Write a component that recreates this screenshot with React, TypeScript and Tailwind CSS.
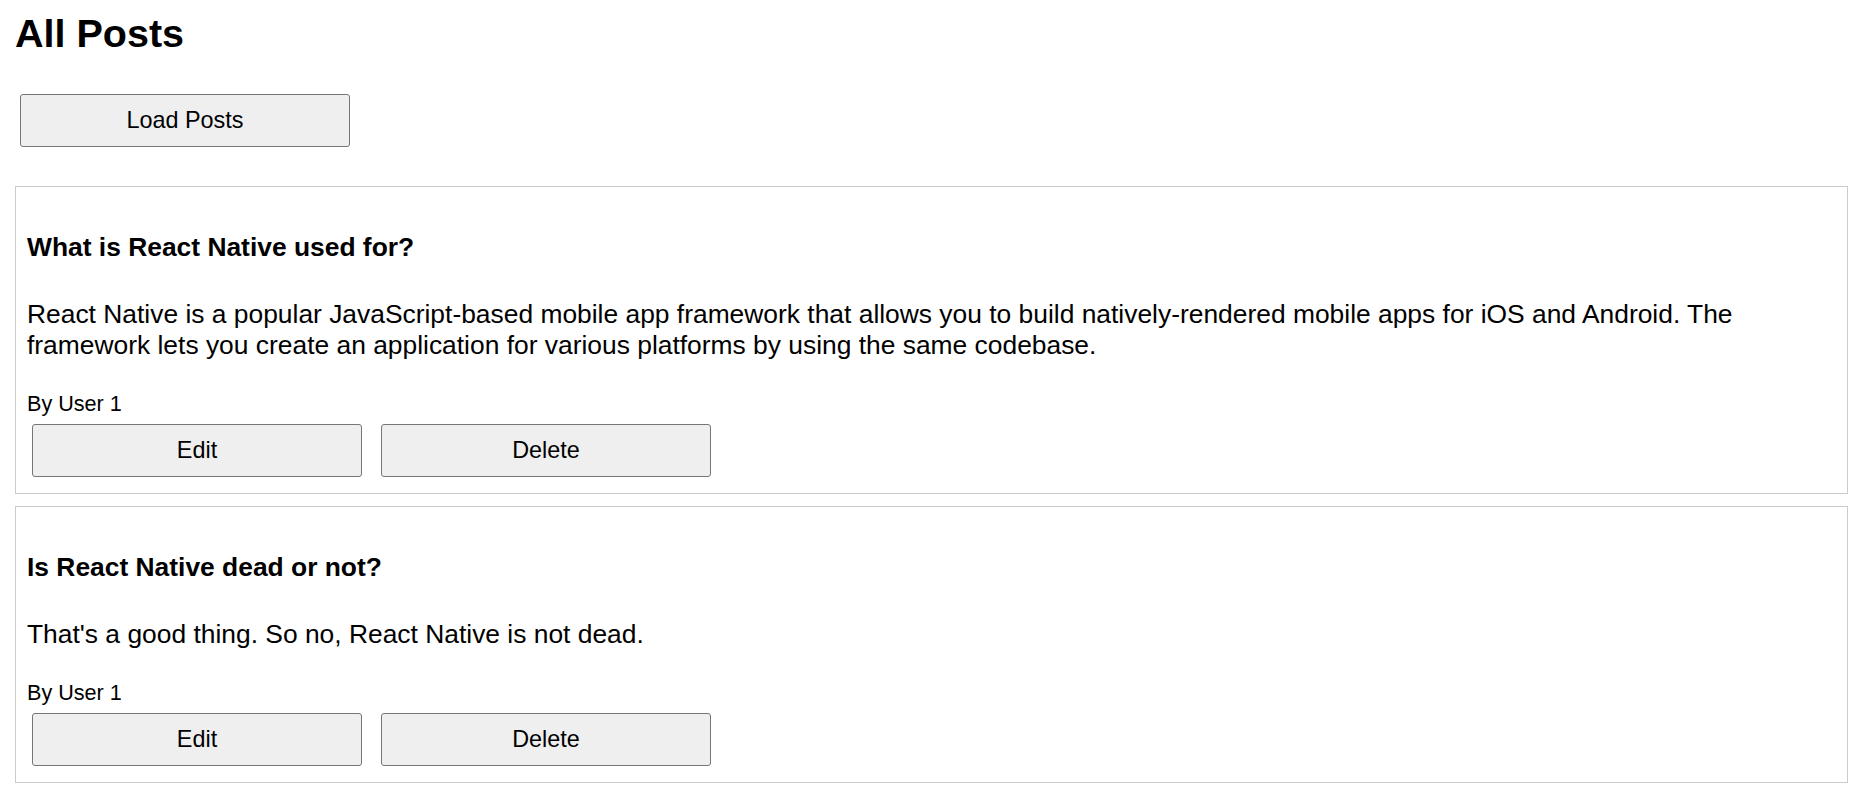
import React from "react";

type Post = { id: number; title: string; body: string; author: string };

const posts: Post[] = [
  {
    id: 1,
    title: "What is React Native used for?",
    body:
      "React Native is a popular JavaScript-based mobile app framework that allows you to build natively-rendered mobile apps for iOS and Android. The framework lets you create an application for various platforms by using the same codebase.",
    author: "User 1",
  },
  {
    id: 2,
    title: "Is React Native dead or not?",
    body: "That's a good thing. So no, React Native is not dead.",
    author: "User 1",
  },
];

function Btn({ children }: { children: React.ReactNode }) {
  return (
    <button className="w-[330px] h-[53px] bg-[#efefef] border border-[#767676] rounded-[3px] text-[23.4px] leading-none text-black font-['Liberation_Sans',Arial,sans-serif]">
      {children}
    </button>
  );
}

function PostCard({ post }: { post: Post }) {
  return (
    <div className="border border-[#cccccc] px-[11px] pt-[45px] pb-[16px]">
      <h3 className="text-[26.4px] leading-[30px] font-bold">{post.title}</h3>
      <p className="mt-[37px] text-[26.4px] leading-[31px]">{post.body}</p>
      <div className="mt-[30px] text-[21.6px] leading-[25px]">By {post.author}</div>
      <div className="mt-[8px] ml-[5px] flex gap-[19px]">
        <Btn>Edit</Btn>
        <Btn>Delete</Btn>
      </div>
    </div>
  );
}

export default function App() {
  return (
    <div className="min-h-screen bg-white text-black pl-[15px] pr-[6px] font-['Liberation_Sans',Arial,sans-serif]">
      <h1 className="pt-[10px] text-[39.5px] leading-[46px] font-bold">All Posts</h1>
      <div className="mt-[38px] ml-[5px]">
        <Btn>Load Posts</Btn>
      </div>
      <div className="mt-[39px] flex flex-col gap-[12px]">
        {posts.map((p) => (
          <PostCard key={p.id} post={p} />
        ))}
      </div>
    </div>
  );
}
